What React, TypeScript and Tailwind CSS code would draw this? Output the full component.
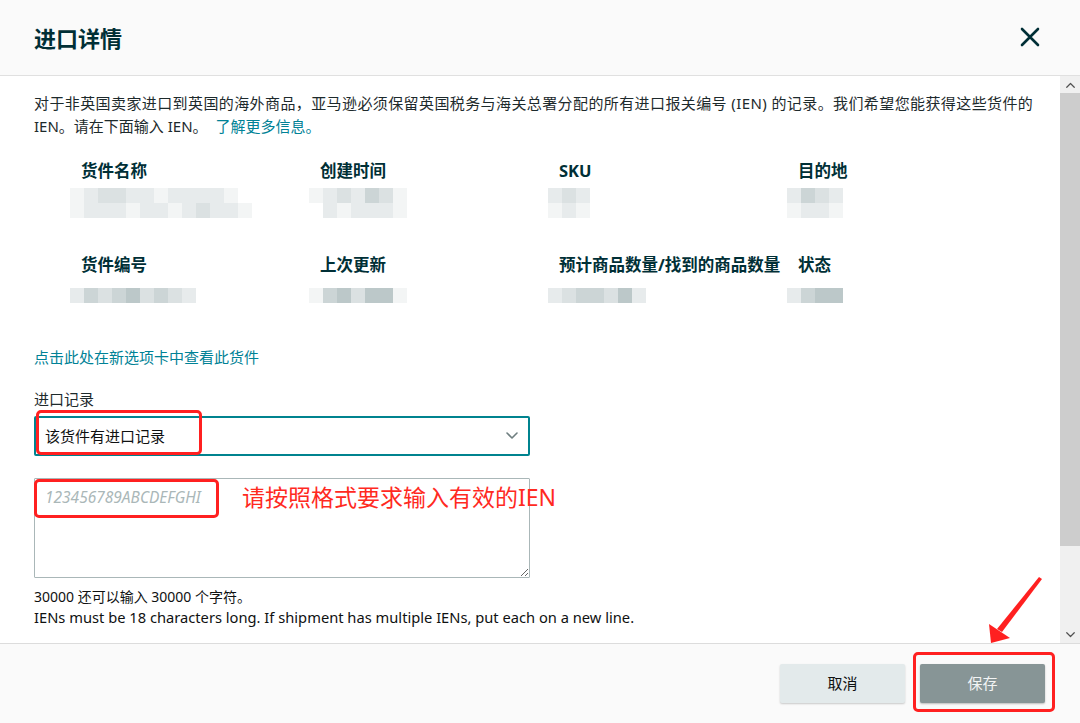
import { ReactNode } from "react";

const shades = [
  "bg-[#f3f5f5]",
  "bg-[#e7ebec]",
  "bg-[#dbe1e2]",
  "bg-[#ccd5d6]",
  "bg-[#bcc8c9]",
];

function Mosaic({ rows }: { rows: number[][] }) {
  return (
    <div className="flex flex-col -ml-[11px]">
      {rows.map((r, i) => (
        <div key={i} className="flex">
          {r.map((s, j) => (
            <div key={j} className={`w-[14px] h-[15px] ${s < 0 ? "bg-transparent" : shades[s]}`} />
          ))}
        </div>
      ))}
    </div>
  );
}

function Field({ label, rows, gap }: { label: string; rows: number[][]; gap: string }) {
  return (
    <div className="flex flex-col">
      <div className="text-[16.5px] leading-[24px] font-bold text-[#002f36]">{label}</div>
      <div className={gap}>
        <Mosaic rows={rows} />
      </div>
    </div>
  );
}

function RedBox({ className }: { className: string }) {
  return <div className={`absolute border-[3px] border-[#ff2020] rounded-[5px] pointer-events-none ${className}`} />;
}

function Chevron({ up, className }: { up?: boolean; className?: string }) {
  return (
    <svg viewBox="0 0 12 8" className={className} fill="none">
      <polyline
        points={up ? "1,7 6,2 11,7" : "1,1 6,6 11,1"}
        stroke="currentColor"
        strokeWidth="1.6"
        strokeLinecap="round"
        strokeLinejoin="round"
      />
    </svg>
  );
}

function Button({ children, primary }: { children: ReactNode; primary?: boolean }) {
  return (
    <button
      className={
        primary
          ? "w-[125px] h-[39px] rounded-[2px] bg-[#879596] text-[#f2f4f4] text-[15px] shadow-[0_1px_2px_rgba(0,0,0,0.25)]"
          : "w-[125px] h-[39px] rounded-[2px] bg-[#e3eaeb] text-[#0f1111] text-[15px] shadow-[0_1px_2px_rgba(0,0,0,0.2)]"
      }
    >
      {children}
    </button>
  );
}

export default function App() {
  return (
    <div className="relative w-[1080px] h-[723px] overflow-hidden bg-white flex flex-col font-['Noto_Sans','Noto_Sans_CJK_SC',sans-serif] text-[#1d2a2c]">
      {/* Header */}
      <div className="h-[76px] shrink-0 bg-[#fafafa] border-b border-[#e0e0e0] flex items-center justify-between pl-[34px] pr-[40px]">
        <h1 className="text-[22px] leading-[30px] font-bold text-[#002f36]">进口详情</h1>
        <svg viewBox="0 0 20 20" className="w-[20px] h-[20px] text-[#002f36] -mt-[1px]" fill="none">
          <path d="M2 2 L18 18 M18 2 L2 18" stroke="currentColor" strokeWidth="2.6" strokeLinecap="round" />
        </svg>
      </div>

      {/* Body */}
      <div className="flex flex-1 min-h-0">
        <div className="flex-1 pl-[34px] pt-[16px]">
          <p className="text-[15px] leading-[23px]">
            <span className="tracking-[0.4px]">
              对于非英国卖家进口到英国的海外商品，亚马逊必须保留英国税务与海关总署分配的所有进口报关编号 (IEN) 的记录。我们希望您能获得这些货件的
            </span>
            <br />
            IEN。请在下面输入 IEN。 <span className="text-[#008296] ml-[4px]">了解更多信息。</span>
          </p>

          <div className="ml-[47px] mt-[21px] grid grid-cols-[239px_239px_239px_239px]">
            <Field
              label="货件名称"
              gap="mt-[5px]"
              rows={[
                [0, 1, 2, 2, 1, 1, 0, 1, 1, 1, 1, 0, -1],
                [0, 1, 1, 1, 0, 1, 1, 0, 1, 2, 1, 1, 0],
              ]}
            />
            <Field
              label="创建时间"
              gap="mt-[5px]"
              rows={[
                [0, 1, 2, 1, 3, 2, 0],
                [-1, 1, 0, 1, 1, 1, 0],
              ]}
            />
            <Field
              label="SKU"
              gap="mt-[5px]"
              rows={[
                [1, 2, 1],
                [0, 1, 0],
              ]}
            />
            <Field
              label="目的地"
              gap="mt-[5px]"
              rows={[
                [1, 3, 2, 1],
                [0, 1, 1, 0],
              ]}
            />
          </div>

          <div className="ml-[47px] mt-[35px] grid grid-cols-[239px_239px_239px_239px]">
            <Field label="货件编号" gap="mt-[11px]" rows={[[1, 3, 2, 3, 4, 2, 3, 2, 1]]} />
            <Field label="上次更新" gap="mt-[11px]" rows={[[0, 3, 4, 2, 4, 4, 0]]} />
            <Field label="预计商品数量/找到的商品数量" gap="mt-[11px]" rows={[[1, 2, 3, 3, 2, 4, 1]]} />
            <Field label="状态" gap="mt-[11px]" rows={[[1, 3, 4, 4]]} />
          </div>

          <div className="mt-[44px] text-[15px] leading-[20px] text-[#008296]">点击此处在新选项卡中查看此货件</div>

          <div className="mt-[22px] text-[15px] leading-[20px]">进口记录</div>

          <div className="relative mt-[7px] w-[496px] h-[40px] border-2 border-[#00838f] rounded-[2px] flex items-center justify-between pl-[9px] pr-[10px]">
            <span className="text-[15px] text-[#0f1111]">该货件有进口记录</span>
            <Chevron className="w-[12px] h-[8px] text-[#6f7f80]" />
            <RedBox className="left-0 -top-[8px] w-[166px] h-[45px]" />
          </div>

          <div className="relative mt-[22px] w-[496px] h-[100px]">
            <textarea
              readOnly
              placeholder="123456789ABCDEFGHI"
              className="w-full h-full border border-[#aab7b8] rounded-[1px] px-[10px] py-[7px] text-[15.5px] leading-[22px] outline-none placeholder:italic placeholder:text-[#aab7b8] resize"
            />
            <RedBox className="left-0 top-[1px] w-[185px] h-[39px]" />
            <div className="absolute left-[208px] top-[4px] text-[23px] leading-[30px] text-[#ff2a1f] whitespace-nowrap">
              请按照格式要求输入有效的IEN
            </div>
          </div>

          <div className="mt-[9px] leading-[20px] text-[#0f1111]">
            <div className="text-[14px]">30000 还可以输入 30000 个字符。</div>
            <div className="text-[14.7px]">
              IENs must be 18 characters long. If shipment has multiple IENs, put each on a new line.
            </div>
          </div>
        </div>

        {/* Scrollbar */}
        <div className="w-[20px] shrink-0 bg-[#f0f0f0] flex flex-col">
          <div className="h-[17px] flex items-center justify-center">
            <Chevron up className="w-[9px] h-[6px] text-[#505050]" />
          </div>
          <div className="h-[453px] bg-[#cdcdcd]" />
          <div className="flex-1" />
          <div className="h-[17px] flex items-center justify-center">
            <Chevron className="w-[9px] h-[6px] text-[#505050]" />
          </div>
        </div>
      </div>

      {/* Footer */}
      <div className="relative h-[80px] shrink-0 bg-[#fafafa] border-t border-[#dcdcdc] flex items-center justify-end gap-[15px] pr-[35px]">
        <Button>取消</Button>
        <Button primary>保存</Button>
        <RedBox className="right-[25px] top-[8px] w-[142px] h-[60px]" />
      </div>

      {/* Annotation arrow */}
      <svg viewBox="0 0 60 72" className="absolute left-[985px] top-[575px] w-[60px] h-[72px] pointer-events-none">
        <polygon points="54,2 57,4 17,57 12,54" fill="#ff2020" />
        <polygon points="6,68 4,49 25,63" fill="#ff2020" />
      </svg>
    </div>
  );
}
